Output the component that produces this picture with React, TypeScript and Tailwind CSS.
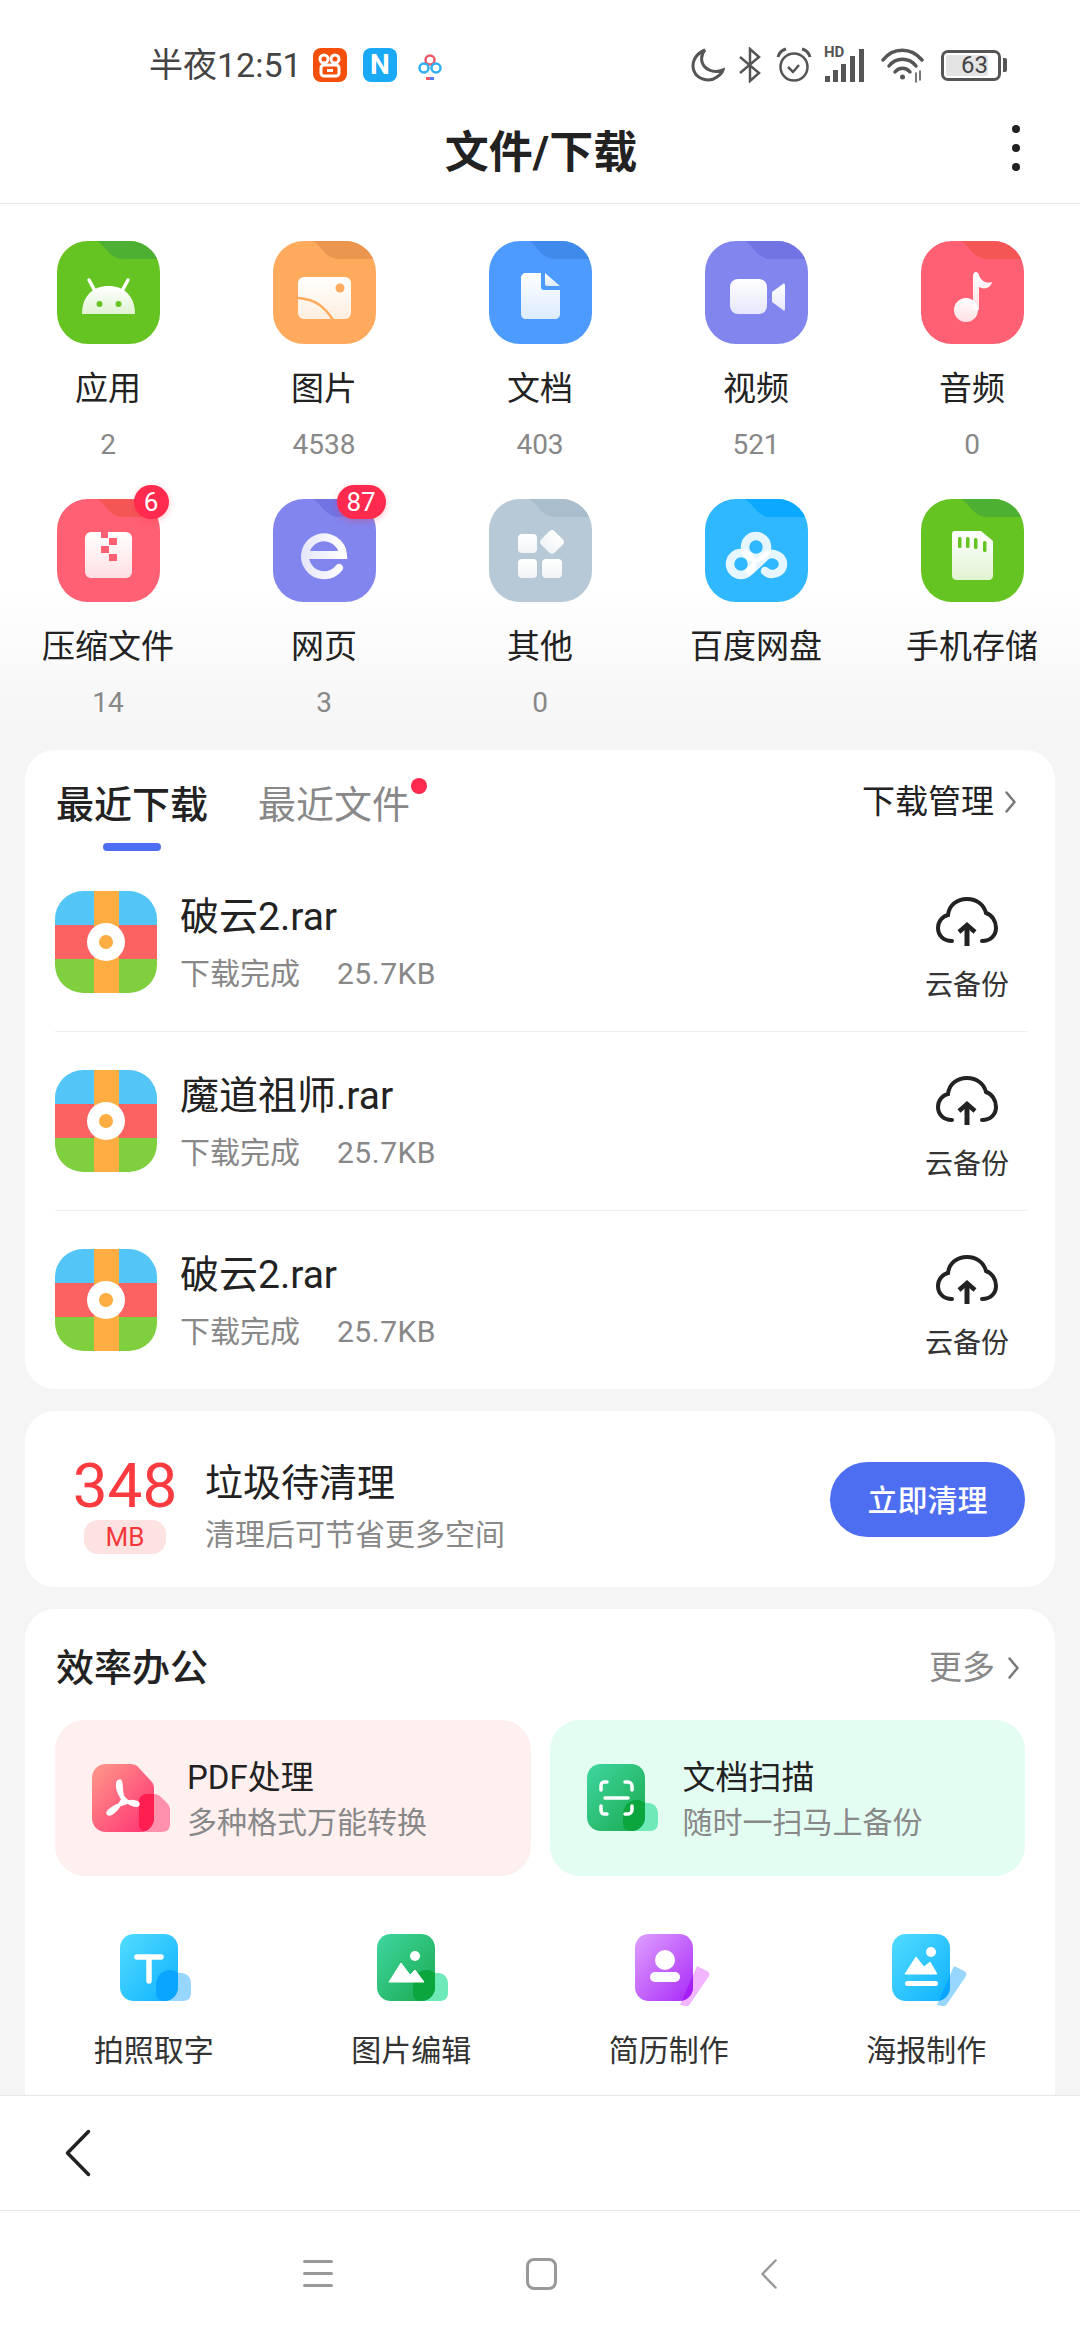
import React from "react";

const Folder = ({ bg, tab, id, children }: { bg: string; tab: string; id: string; children?: React.ReactNode }) => (
  <svg width="103" height="103" viewBox="0 0 103 103" className="block">
    <defs>
      <clipPath id={`c-${id}`}><rect width="103" height="103" rx="31" /></clipPath>
      <linearGradient id={`g-${id}`} x1="0" y1="0" x2="0" y2="1">
        <stop offset="0" stopColor="#fff" />
        <stop offset="1" stopColor="#fff" stopOpacity="0.8" />
      </linearGradient>
    </defs>
    <g clipPath={`url(#c-${id})`}>
      <rect width="103" height="103" fill={bg} />
      <path d="M40 0 C48 4 52 18 66 18 H103 V0 Z" fill={tab} />
    </g>
    <g fill={`url(#g-${id})`}>{children}</g>
  </svg>
);

const cats: { name: string; count?: string; bg: string; tab: string; badge?: string; icon: React.ReactNode }[] = [
  { name: "应用", count: "2", bg: "#65c422", tab: "#4db032", icon: (
    <>
      <path d="M25 73 C25 55 36 45 51.5 45 C67 45 78 55 78 73 Z" />
      <path d="M32 39 L38 50 M71 39 L65 50" stroke="#fff" strokeWidth="3.5" strokeLinecap="round" fill="none" />
      <circle cx="42.5" cy="63" r="3" fill="#65c422" /><circle cx="61.5" cy="63" r="3" fill="#65c422" />
    </>
  ) },
  { name: "图片", count: "4538", bg: "#ffaa5c", tab: "#ea964e", icon: (
    <>
      <rect x="25" y="36" width="53" height="42" rx="6" />
      <circle cx="67" cy="47" r="4.5" fill="#ffaa5c" />
      <path d="M25 57 C42 58 52 66 60 79" stroke="#ffaa5c" strokeWidth="2.5" fill="none" />
    </>
  ) },
  { name: "文档", count: "403", bg: "#4d9bff", tab: "#408aeb", icon: (
    <>
      <path d="M37 32 H52 V46 C52 48 53 49 55 49 H71 V73 C71 76 69 78 66 78 H37 C34 78 32 76 32 73 V37 C32 34 34 32 37 32 Z" />
      <path d="M56 32 L71 45 H58 C57 45 56 44 56 43 Z" />
    </>
  ) },
  { name: "视频", count: "521", bg: "#8285ee", tab: "#7274e4", icon: (
    <>
      <rect x="25" y="38" width="37" height="35" rx="8" />
      <path d="M67 51 L78 43 C79 42 80 43 80 44 V68 C80 70 79 70 78 69 L67 61 Z" />
    </>
  ) },
  { name: "音频", count: "0", bg: "#ff6073", tab: "#f45656", icon: (
    <>
      <circle cx="45" cy="69" r="12" />
      <path d="M52 35 C52 30 57 30 58 34 C60 40 65 43 71 41 C70 47 63 49 58 46 V69 H52 Z" />
    </>
  ) },
  { name: "压缩文件", count: "14", bg: "#ff6073", tab: "#f45656", badge: "6", icon: (
    <>
      <rect x="28" y="33" width="47" height="46" rx="6" />
      <g fill="#ff6073">
        <rect x="44" y="33" width="7" height="6" /><rect x="52" y="39" width="8" height="7" />
        <rect x="44" y="47" width="8" height="7" /><rect x="52" y="55" width="8" height="7" />
      </g>
    </>
  ) },
  { name: "网页", count: "3", bg: "#8285ee", tab: "#7274e4", badge: "87", icon: (
    <path d="M33 56 H70 A19 19 0 1 0 66 69" fill="none" stroke={`url(#g-web)`} strokeWidth="8" strokeLinecap="round" />
  ) },
  { name: "其他", count: "0", bg: "#b7c8d6", tab: "#a9bdcc", icon: (
    <>
      <rect x="29" y="35" width="19" height="19" rx="4" />
      <rect x="53.5" y="33.5" width="19" height="19" rx="4" transform="rotate(45 63 43)" />
      <rect x="29" y="60" width="19" height="19" rx="4" /><rect x="53" y="60" width="20" height="19" rx="4" />
    </>
  ) },
  { name: "百度网盘", bg: "#2fb7ff", tab: "#0aa8ff", icon: (
    <>
      <g fill="none" stroke="#fff" strokeOpacity="0.88" strokeWidth="8.5">
        <circle cx="51" cy="48" r="11" /><circle cx="36" cy="65" r="11" />
        <path d="M45 72 L61 57 C67 52 78 57 78 65 C78 74 66 78 60 72" strokeLinecap="round" />
      </g>
    </>
  ) },
  { name: "手机存储", bg: "#65c422", tab: "#4db032", icon: (
    <>
      <path d="M34 32 H60 L72 42 V77 C72 79 70 81 68 81 H35 C33 81 31 79 31 77 V35 C31 33 32 32 34 32 Z" />
      <g fill="#65c422">
        <rect x="37" y="38" width="3.5" height="11" rx="1.5" /><rect x="45" y="38" width="3.5" height="11" rx="1.5" />
        <rect x="53" y="39" width="3.5" height="11" rx="1.5" /><rect x="62" y="42" width="3.5" height="11" rx="1.5" />
      </g>
    </>
  ) },
];

const RarIcon = () => (
  <svg width="102" height="102" viewBox="0 0 102 102" className="block shrink-0">
    <defs><clipPath id="rar"><rect width="102" height="102" rx="28" /></clipPath></defs>
    <g clipPath="url(#rar)">
      <rect width="102" height="34" fill="#53c5f7" />
      <rect y="34" width="102" height="34" fill="#fb6363" />
      <rect y="68" width="102" height="34" fill="#7fcf3f" />
      <rect x="39" width="25" height="102" fill="#fdad41" />
      <circle cx="51" cy="51" r="19" fill="#fff" />
      <circle cx="51" cy="51" r="7" fill="#fdad41" />
    </g>
  </svg>
);

const Cloud = () => (
  <svg width="62" height="50" viewBox="0 0 62 50" fill="none" stroke="#222" strokeWidth="4" className="block shrink-0">
    <path d="M16 44 C7 44 2 38 2 31 C2 24 7 19 12 18 C13 8 21 2 31 2 C41 2 48 8 50 16 C56 18 60 24 60 31 C60 38 55 44 46 44" strokeLinecap="round" />
    <path d="M31 49 V30" strokeWidth="5" />
    <path d="M23 35 L31 28 L39 35" strokeWidth="4.5" />
  </svg>
);

const Chevron = ({ color, w, h, sw }: { color: string; w: number; h: number; sw: number }) => (
  <svg width={w} height={h} viewBox={`0 0 ${w} ${h}`} fill="none" stroke={color} strokeWidth={sw} strokeLinejoin="round" strokeLinecap="round" className="block">
    <path d={`M${sw} ${sw} L${w - sw} ${h / 2} L${sw} ${h - sw}`} />
  </svg>
);

const BackChevron = ({ color, w, h, sw }: { color: string; w: number; h: number; sw: number }) => (
  <svg width={w} height={h} viewBox={`0 0 ${w} ${h}`} fill="none" stroke={color} strokeWidth={sw} strokeLinejoin="round" strokeLinecap="round" className="block">
    <path d={`M${w - sw} ${sw} L${sw} ${h / 2} L${w - sw} ${h - sw}`} />
  </svg>
);

const Doc = ({ id, from, to, light, dark, tilted, h = 67, cut, children }: { id: string; from: string; to: string; light: string; dark: string; tilted?: boolean; h?: number; cut?: boolean; children?: React.ReactNode }) => {
  const body = cut
    ? "M14 0 H38 C42 0 45 1 47 4 L59 17 C61 19 62 21 62 25 V54 C62 62 56 68 48 68 H14 C6 68 0 62 0 54 V14 C0 6 6 0 14 0 Z"
    : "M14 0 H44 C52 0 58 6 58 14 V53 C58 61 52 67 44 67 H14 C6 67 0 61 0 53 V14 C0 6 6 0 14 0 Z";
  const over = tilted ? (
    <path d="M62 32 L72 37 C74 38 75 40 74 42 L55 70 C54 72 52 72 50 72 L45 71 Z" />
  ) : cut ? (
    <path d="M47 38 C47 33 50 30 55 30 H62 C65 30 67 31 69 33 L75 39 C77 41 78 43 78 46 V60 C78 65 75 68 70 68 H55 C50 68 47 65 47 60 Z" />
  ) : (
    <path d="M36 52 C36 42 42 36 50 36 C55 36 56 39 60 39 H62 C68 40 71 44 71 50 V59 C71 64 68 67 63 67 H44 C39 67 36 64 36 59 Z" />
  );
  return (
    <svg width="68" height={h} viewBox={`0 0 68 ${h}`} overflow="visible" className="block shrink-0">
      <defs>
        <linearGradient id={`d-${id}`} x1="0" y1="0" x2="1" y2="1">
          <stop offset="0" stopColor={from} /><stop offset="1" stopColor={to} />
        </linearGradient>
        <clipPath id={`b-${id}`}><path d={body} /></clipPath>
      </defs>
      <g fill={light}>{over}</g>
      <path d={body} fill={`url(#d-${id})`} />
      <g fill={dark} clipPath={`url(#b-${id})`}>{over}</g>
      {children}
    </svg>
  );
};

const files = ["破云2.rar", "魔道祖师.rar", "破云2.rar"];

export default function App() {
  return (
    <div className="w-[1080px] h-[2340px] flex flex-col overflow-hidden bg-white text-[#222] font-[Roboto,'Noto_Sans_CJK_SC',sans-serif]">
      {/* status bar */}
      <div className="h-[100px] pt-[30px] shrink-0">
        <div className="h-[70px] flex items-center pl-[149px] text-[#444]">
          <span className="text-[34px] leading-[40px] w-[164px] whitespace-nowrap">半夜12:51</span>
          <div className="w-[34px] h-[34px] rounded-[8px] bg-[#f4500c]">
            <svg width="34" height="34" viewBox="0 0 34 34" fill="none" stroke="#fff" strokeWidth="3">
              <circle cx="11" cy="11" r="4" /><circle cx="22" cy="11" r="4" />
              <rect x="8" y="17" width="18" height="11" rx="3" /><path d="M14 22.5 H20" />
            </svg>
          </div>
          <div className="w-[34px] h-[34px] rounded-[8px] bg-[#19a9f5] ml-[16px] flex items-center justify-center text-white font-bold text-[28px] leading-[34px]">N</div>
          <div className="w-[34px] h-[34px] rounded-[8px] bg-white ml-[16px]">
            <svg width="34" height="34" viewBox="0 0 34 34" fill="none" strokeWidth="2.5">
              <circle cx="17" cy="12" r="4.5" stroke="#ef5a6b" />
              <circle cx="11" cy="20" r="4.5" stroke="#2fb0ee" />
              <circle cx="23" cy="20" r="4.5" stroke="#2fb0ee" />
              <rect x="13" y="29" width="4" height="3" fill="#ef5a6b" stroke="none" /><rect x="17" y="29" width="4" height="3" fill="#4d7ff0" stroke="none" />
            </svg>
          </div>
          <svg width="34" height="34" viewBox="0 0 34 34" fill="none" stroke="#555" strokeWidth="3" className="ml-[244px]">
            <path d="M14 2 C4 6 0 15 3 23 C6 31 18 35 26 29 C29 27 31 25 32 22 C22 26 13 21 11 14 C10 9 11 5 14 2 Z" />
          </svg>
          <svg width="24" height="36" viewBox="0 0 24 36" fill="none" stroke="#555" strokeWidth="2.5" className="ml-[13px]">
            <path d="M2 10 L21 26 L12 34 V2 L21 10 L2 26" />
          </svg>
          <svg width="36" height="36" viewBox="0 0 36 36" fill="none" stroke="#555" strokeWidth="2.5" className="ml-[14px]">
            <circle cx="18" cy="20" r="13.5" /><path d="M12 20 L17 25 L23 18" /><path d="M2 10 C3 6 6 3 10 2 M34 10 C33 6 30 3 26 2" strokeWidth="3" />
          </svg>
          <div className="relative w-[42px] h-[36px] ml-[12px]">
            <span className="absolute left-0 top-[-3px] text-[15px] leading-[16px] font-bold text-[#555]">HD</span>
            <svg width="42" height="36" viewBox="0 0 42 36" fill="#555" className="block">
              <rect x="1" y="29" width="5" height="6" /><rect x="9" y="23" width="5" height="12" />
              <rect x="17" y="17" width="5" height="18" /><rect x="26" y="9" width="5" height="26" /><rect x="35" y="2" width="5" height="33" />
            </svg>
          </div>
          <svg width="44" height="38" viewBox="0 0 44 38" fill="none" stroke="#555" strokeWidth="3.5" strokeLinecap="round" className="ml-[15px]">
            <path d="M2 14 C12 1 30 1 41 14" /><path d="M8 20 C15 11 28 11 35 20" /><path d="M14 26 C18 21 25 21 29 26" />
            <circle cx="21.5" cy="31" r="2.5" fill="#555" stroke="none" /><path d="M35 27 V36 M39 25 V34" strokeWidth="1.6" />
          </svg>
          <div className="ml-[16px] w-[60px] h-[31px] rounded-[7px] border-[3px] border-[#555] p-[2px] flex">
            <div className="w-[42px] h-full bg-[#e4e4e4] rounded-[2px] flex items-center justify-end text-[24px] leading-none text-[#444]">63</div>
          </div>
          <div className="w-[4px] h-[14px] bg-[#555] ml-[2px] rounded-r-[2px]" />
        </div>
      </div>

      {/* title */}
      <div className="relative h-[104px] shrink-0 border-b border-[#e6e6e6] flex items-center justify-center pt-[2px] pl-[2px]">
        <span className="text-[44px] leading-[50px] font-bold text-[#222]">文件/下载</span>
        <div className="absolute right-[60px] top-[25px] flex flex-col gap-[11px]">
          <div className="w-[8px] h-[8px] rounded-full bg-[#222]" />
          <div className="w-[8px] h-[8px] rounded-full bg-[#222]" />
          <div className="w-[8px] h-[8px] rounded-full bg-[#222]" />
        </div>
      </div>

      {/* main */}
      <div className="flex-1 min-h-0 overflow-hidden bg-[#f5f5f5]">
        <svg width="0" height="0" className="absolute">
          <defs>
            <linearGradient id="g-web" gradientUnits="userSpaceOnUse" x1="30" y1="0" x2="72" y2="0">
              <stop offset="0" stopColor="#fff" stopOpacity="0.8" /><stop offset="1" stopColor="#fff" />
            </linearGradient>
          </defs>
        </svg>
        <div className="grid grid-cols-5 content-start gap-y-[36px] pt-[37px] h-[546px] bg-[linear-gradient(to_bottom,#ffffff_70%,#f5f5f5_97%)]">
          {cats.map((c, i) => (
            <div key={i} className="flex flex-col items-center">
              <div className="relative w-[103px] h-[103px]">
                <Folder bg={c.bg} tab={c.tab} id={`f${i}`}>{c.icon}</Folder>
                {c.badge && (
                  <div className={`absolute top-[-14px] h-[34px] rounded-full bg-[#ff2a4d] text-white text-[26px] leading-[34px] text-center shadow-[0_2px_6px_rgba(255,42,77,0.3)] ${c.badge.length > 1 ? "left-[64px] w-[49px]" : "left-[77px] w-[35px]"}`}>
                    {c.badge}
                  </div>
                )}
              </div>
              <div className="mt-[23px] text-[33px] leading-[44px] text-[#222] whitespace-nowrap">{c.name}</div>
              {c.count && <div className="mt-[16px] text-[28px] leading-[36px] text-[#888]">{c.count}</div>}
            </div>
          ))}
        </div>

        {/* recent */}
        <div className="mx-[25px] rounded-[30px] bg-white">
          <div className="h-[103px] pt-[33px] pl-[31px] pr-[38px] flex items-start">
            <div className="flex flex-col items-center">
              <span className="text-[38px] leading-[44px] font-medium text-[#222] whitespace-nowrap">最近下载</span>
              <div className="mt-[16px] w-[58px] h-[8px] rounded-full bg-[#4e6ef2]" />
            </div>
            <div className="relative ml-[50px]">
              <span className="text-[38px] leading-[44px] text-[#888] whitespace-nowrap">最近文件</span>
              <div className="absolute right-[-17px] top-[-5px] w-[16px] h-[16px] rounded-full bg-[#ff2a4d]" />
            </div>
            <div className="ml-auto flex items-center h-[38px]">
              <span className="text-[33px] leading-[38px] text-[#222] whitespace-nowrap">下载管理</span>
              <div className="ml-[10px]"><Chevron color="#777" w={13} h={24} sw={2.5} /></div>
            </div>
          </div>
          <div className="ml-[30px] mr-[28px]">
            {files.map((f, i) => (
              <div key={i} className={`flex items-start py-[38px] ${i < 2 ? "border-b border-[#eeeeee]" : ""}`}>
                <RarIcon />
                <div className="ml-[23px] h-[102px] pt-[3px] flex-1 flex flex-col">
                  <span className="text-[39px] leading-[46px] text-[#222] whitespace-nowrap">{f}</span>
                  <div className="mt-[15px] flex text-[30px] leading-[38px] text-[#888]">
                    <span className="whitespace-nowrap">下载完成</span>
                    <span className="ml-[37px] whitespace-nowrap tracking-[0.5px]">25.7KB</span>
                  </div>
                </div>
                <div className="w-[100px] mr-[10px] h-[102px] pt-[6px] flex flex-col items-center">
                  <Cloud />
                  <span className="mt-[22px] text-[28px] leading-[34px] text-[#333] whitespace-nowrap">云备份</span>
                </div>
              </div>
            ))}
          </div>
        </div>

        {/* cleanup */}
        <div className="mx-[25px] mt-[22px] h-[176px] rounded-[30px] bg-white flex items-center pl-[50px] pr-[30px]">
          <div className="w-[100px] mt-[12px] flex flex-col items-center shrink-0">
            <span className="text-[62px] leading-[60px] text-[#fb3b3f]">348</span>
            <div className="mt-[4px] w-[82px] h-[34px] rounded-[14px] bg-[#fde2e2] text-center text-[26px] leading-[34px] text-[#f3383c]">MB</div>
          </div>
          <div className="ml-[30px] mt-[18px] flex flex-col">
            <span className="text-[38px] leading-[44px] text-[#222] whitespace-nowrap">垃圾待清理</span>
            <span className="mt-[10px] text-[30px] leading-[40px] text-[#888] whitespace-nowrap">清理后可节省更多空间</span>
          </div>
          <div className="ml-auto w-[195px] h-[75px] pt-[3px] rounded-full bg-[#4e6ef2] text-white text-[30px] font-medium leading-[72px] text-center">立即清理</div>
        </div>

        {/* office */}
        <div className="mx-[25px] mt-[22px] pt-[37px] rounded-[30px] bg-white h-[520px]">
          <div className="flex items-center pl-[31px] pr-[35px] h-[44px]">
            <span className="text-[38px] leading-[44px] font-medium text-[#222]">效率办公</span>
            <span className="ml-auto text-[33px] leading-[40px] text-[#888]">更多</span>
            <div className="ml-[12px]"><Chevron color="#777" w={13} h={24} sw={2.5} /></div>
          </div>
          <div className="mt-[30px] mx-[30px] grid grid-cols-2 gap-[19px]">
            <div className="h-[156px] rounded-[30px] bg-[#fff0f0] flex items-center pl-[37px]">
              <Doc id="pdf" cut h={68} from="#ff9a8a" to="#ff2e73" light="#ff90ac" dark="#ff1e50">
                <path d="M28 17 C24 17 25 27 31 35 C26 45 20 50 17 50 C13 49 21 42 36 38 C41 37 46 38 46 40 C46 43 37 41 31 33 C28 28 30 18 28 17 Z" fill="none" stroke="#fff" strokeWidth="3.5" strokeLinejoin="round" />
              </Doc>
              <div className="ml-[27px] mt-[4px] flex flex-col">
                <span className="text-[33px] leading-[42px] text-[#222] whitespace-nowrap">PDF处理</span>
                <span className="mt-[4px] text-[30px] leading-[40px] text-[#888] whitespace-nowrap">多种格式万能转换</span>
              </div>
            </div>
            <div className="h-[156px] rounded-[30px] bg-[#e3fdf3] flex items-center pl-[37px]">
              <Doc id="scan" h={68} from="#3fd6a0" to="#1aaa4e" light="#6eeab9" dark="#0ca63e">
                <g fill="none" stroke="#fff" strokeWidth="3.5" strokeLinecap="round">
                  <path d="M14 26 V22 C14 20 15 18 17 18 H20 M38 18 H41 C43 18 45 20 45 22 V26 M14 42 V46 C14 48 15 50 17 50 H20 M38 50 H41 C43 50 45 48 45 46 V42" />
                  <path d="M18 34 H41" />
                </g>
              </Doc>
              <div className="ml-[28px] mt-[4px] flex flex-col">
                <span className="text-[33px] leading-[42px] text-[#222] whitespace-nowrap">文档扫描</span>
                <span className="mt-[4px] text-[30px] leading-[40px] text-[#888] whitespace-nowrap">随时一扫马上备份</span>
              </div>
            </div>
          </div>
          <div className="mt-[58px] grid grid-cols-4">
            <div className="flex flex-col items-center">
              <Doc id="t" from="#52dcff" to="#0eb1ff" light="#97d6ff" dark="#0aa5ff">
                <path d="M17 23 H41 M29 23 V47" fill="none" stroke="#fff" strokeWidth="5.5" strokeLinecap="round" />
              </Doc>
              <span className="mt-[31px] text-[30px] leading-[38px] text-[#333] whitespace-nowrap">拍照取字</span>
            </div>
            <div className="flex flex-col items-center">
              <Doc id="p" from="#3fd6a0" to="#1aaa4e" light="#6eeab9" dark="#0ca63e">
                <circle cx="38" cy="22" r="5" fill="#fff" />
                <path d="M12 48 L24 29 L33 41 L38 36 L47 48 Z" fill="#fff" stroke="#fff" strokeWidth="1" strokeLinejoin="round" />
              </Doc>
              <span className="mt-[31px] text-[30px] leading-[38px] text-[#333] whitespace-nowrap">图片编辑</span>
            </div>
            <div className="flex flex-col items-center">
              <Doc id="r" tilted from="#dfa0ff" to="#a82af7" light="#f3b5ff" dark="#a61ef5">
                <circle cx="30" cy="26" r="10" fill="#fff" />
                <rect x="15" y="38" width="30" height="10" rx="5" fill="#fff" />
              </Doc>
              <span className="mt-[31px] text-[30px] leading-[38px] text-[#333] whitespace-nowrap">简历制作</span>
            </div>
            <div className="flex flex-col items-center">
              <Doc id="s" tilted from="#52dcff" to="#0eb1ff" light="#97d6ff" dark="#0aa5ff">
                <circle cx="39" cy="18" r="5" fill="#fff" />
                <path d="M13 40 L24 23 L32 33 L38 28 L45 40 Z" fill="#fff" stroke="#fff" strokeWidth="1" strokeLinejoin="round" />
                <rect x="13" y="47" width="33" height="5" rx="2.5" fill="#fff" />
              </Doc>
              <span className="mt-[31px] text-[30px] leading-[38px] text-[#333] whitespace-nowrap">海报制作</span>
            </div>
          </div>
        </div>
      </div>

      {/* app bottom bar */}
      <div className="h-[116px] shrink-0 bg-white border-y border-[#e6e6e6] flex items-center pl-[64px]">
        <BackChevron color="#222" w={28} h={50} sw={3.5} />
      </div>

      {/* system nav */}
      <div className="h-[129px] shrink-0 bg-white flex items-center justify-center pb-[4px]">
        <div className="w-[30px] flex flex-col gap-[9px] mr-[193px]">
          <div className="h-[3px] bg-[#999] rounded-full" /><div className="h-[3px] bg-[#999] rounded-full" /><div className="h-[3px] bg-[#999] rounded-full" />
        </div>
        <div className="w-[31px] h-[32px] rounded-[8px] border-[3px] border-[#999]" />
        <div className="ml-[203px]"><BackChevron color="#999" w={18} h={32} sw={2.5} /></div>
      </div>
    </div>
  );
}
